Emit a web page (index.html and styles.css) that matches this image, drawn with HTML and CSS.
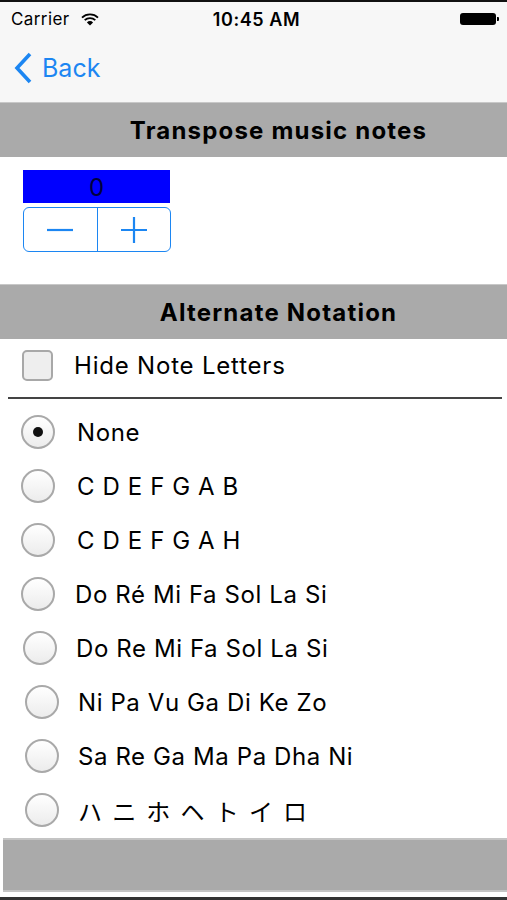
FILE: index.html
```html
<!DOCTYPE html>
<html lang="en">
<head>
    <meta charset="UTF-8">
    <meta name="viewport" content="width=device-width, initial-scale=1.0">
    <title>Transpose music notes</title>
    <link rel="stylesheet" href="styles.css">
</head>
<body>
    <div class="screen">
        <header class="top-bars">
            <div class="status-bar">
                <div class="carrier">
                    Carrier
                    <svg class="wifi" width="18" height="13" viewBox="0 0 18 13">
                        <path d="M1 4.6 A11.5 11.5 0 0 1 17 4.6" fill="none" stroke="#000" stroke-width="1.8"/>
                        <path d="M3.7 7.2 A7.6 7.6 0 0 1 14.3 7.2" fill="none" stroke="#000" stroke-width="1.8"/>
                        <path d="M9 12.6 L5.9 9.4 A4.4 4.4 0 0 1 12.1 9.4 Z" fill="#000"/>
                    </svg>
                </div>
                <div class="clock">10:45 AM</div>
                <div class="battery">
                    <span class="battery-body"></span>
                    <span class="battery-tip"></span>
                </div>
            </div>
            <nav class="nav-bar">
                <a class="back" href="#">
                    <svg width="22" height="34" viewBox="0 0 22 34">
                        <path d="M18 3 L5 17 L18 31" fill="none" stroke="#1c86f2" stroke-width="3.6"/>
                    </svg>
                    Back
                </a>
            </nav>
        </header>

        <main>
            <h2 class="section-title">Transpose music notes</h2>

            <div class="transpose">
                <div class="value-box">0</div>
                <div class="stepper">
                    <button class="step">
                        <svg width="26" height="26" viewBox="0 0 26 26"><path d="M0 13 H26" stroke="#1c86f2" stroke-width="2.2"/></svg>
                    </button>
                    <button class="step">
                        <svg width="26" height="26" viewBox="0 0 26 26"><path d="M0 13 H26 M13 0 V26" stroke="#1c86f2" stroke-width="2.2"/></svg>
                    </button>
                </div>
            </div>

            <h2 class="section-title">Alternate Notation</h2>

            <label class="check-row">
                <span class="checkbox"></span>
                Hide Note Letters
            </label>

            <ul class="options">
                <li class="option"><span class="radio selected"></span><span class="label">None</span></li>
                <li class="option"><span class="radio"></span><span class="label">C D E F G A B</span></li>
                <li class="option"><span class="radio"></span><span class="label">C D E F G A H</span></li>
                <li class="option"><span class="radio"></span><span class="label tight">Do Ré Mi Fa Sol La Si</span></li>
                <li class="option nudge"><span class="radio"></span><span class="label">Do Re Mi Fa Sol La Si</span></li>
                <li class="option far"><span class="radio"></span><span class="label">Ni Pa Vu Ga Di Ke Zo</span></li>
                <li class="option far"><span class="radio"></span><span class="label">Sa Re Ga Ma Pa Dha Ni</span></li>
                <li class="option far"><span class="radio"></span><span class="label kana">ハ ニ ホ ヘ ト イ ロ</span></li>
            </ul>

            <div class="bottom-bar"></div>
        </main>
    </div>
</body>
</html>
```

FILE: styles.css
```css
body {
    margin: 0;
    padding: 0;
    background: #fff;
    font-family: Inter, "Liberation Sans", sans-serif;
    color: #000;
}

.screen {
    width: 507px;
    height: 900px;
    overflow: hidden;
    border-top: 2px solid #111;
    border-bottom: 3px solid #333;
    box-sizing: border-box;
}

.top-bars {
    background: #f7f7f7;
    height: 100px;
}

.status-bar {
    height: 34px;
    display: flex;
    align-items: center;
    justify-content: space-between;
    padding: 0 8px 0 11px;
    font-size: 17px;
}

.carrier {
    display: flex;
    align-items: center;
    gap: 11px;
    width: 120px;
    letter-spacing: 0.4px;
}

.clock {
    font-size: 18px;
    font-weight: 600;
    letter-spacing: 0.6px;
    margin-left: 3px;
}

.battery {
    width: 120px;
    display: flex;
    justify-content: flex-end;
    align-items: center;
}

.battery-body {
    width: 36px;
    height: 12px;
    background: #000;
    border-radius: 3px;
}

.battery-tip {
    width: 2px;
    height: 4px;
    background: #000;
    margin-left: 1px;
    border-radius: 0 1px 1px 0;
}

.nav-bar {
    height: 66px;
    display: flex;
    align-items: center;
    padding-left: 12px;
}

.back {
    display: flex;
    align-items: center;
    gap: 8px;
    color: #1c86f2;
    text-decoration: none;
    font-size: 25px;
    margin-top: -2px;
}

.section-title {
    margin: 0;
    height: 55px;
    background: #aaaaaa;
    border-top: 1px solid #c8c8c8;
    box-sizing: border-box;
    display: flex;
    align-items: center;
    justify-content: center;
    padding-left: 50px;
    font-size: 24px;
    font-weight: bold;
    letter-spacing: 1.2px;
}

.transpose {
    padding: 13px 23px 32px;
}

.value-box {
    width: 147px;
    height: 33px;
    background: #0000ff;
    color: #00003a;
    font-size: 24px;
    text-align: center;
    line-height: 35px;
}

.stepper {
    margin-top: 4px;
    width: 148px;
    height: 45px;
    display: flex;
    border: 1.5px solid #1c86f2;
    border-radius: 6px;
    box-sizing: border-box;
}

.step {
    flex: 1;
    background: none;
    border: none;
    padding: 0;
    display: flex;
    align-items: center;
    justify-content: center;
}

.step + .step {
    border-left: 1.5px solid #1c86f2;
}

.check-row {
    height: 60px;
    box-sizing: border-box;
    padding-bottom: 5px;
    display: flex;
    align-items: center;
    gap: 21px;
    font-size: 24px;
    letter-spacing: 0.8px;
    border-bottom: 2px solid #444;
    margin: 0 5px 0 8px;
    padding-left: 14px;
}

.checkbox {
    width: 31px;
    height: 31px;
    box-sizing: border-box;
    border: 2px solid #a8a8a8;
    border-radius: 5px;
    background: #eeeeee;
}

.options {
    list-style: none;
    margin: 0;
    padding: 6px 0 0;
}

.option {
    height: 54px;
    display: flex;
    align-items: center;
    padding-left: 21px;
    font-size: 24px;
    letter-spacing: 0.6px;
}

.option.nudge {
    padding-left: 23px;
}

.option.far {
    padding-left: 25px;
}

.radio {
    width: 34px;
    height: 34px;
    box-sizing: border-box;
    border: 2px solid #a9a9a9;
    border-radius: 50%;
    background: linear-gradient(to bottom, #ffffff, #ececec);
    display: flex;
    align-items: center;
    justify-content: center;
}

.radio.selected::after {
    content: "";
    width: 10px;
    height: 10px;
    border-radius: 50%;
    background: #111;
}

.label {
    margin-left: 22px;
}

.option.far .label,
.option.nudge .label {
    margin-left: 19px;
}

.label.tight {
    margin-left: 20px;
}

.label.kana {
    font-family: "Noto Sans CJK JP", sans-serif;
    font-weight: 400;
    letter-spacing: 2.4px;
}

.bottom-bar {
    margin: 1px 0 0 3px;
    height: 54px;
    background: #aaaaaa;
    border-top: 2px solid #c4c4c4;
    border-bottom: 2px solid #c4c4c4;
    box-sizing: border-box;
}
```
